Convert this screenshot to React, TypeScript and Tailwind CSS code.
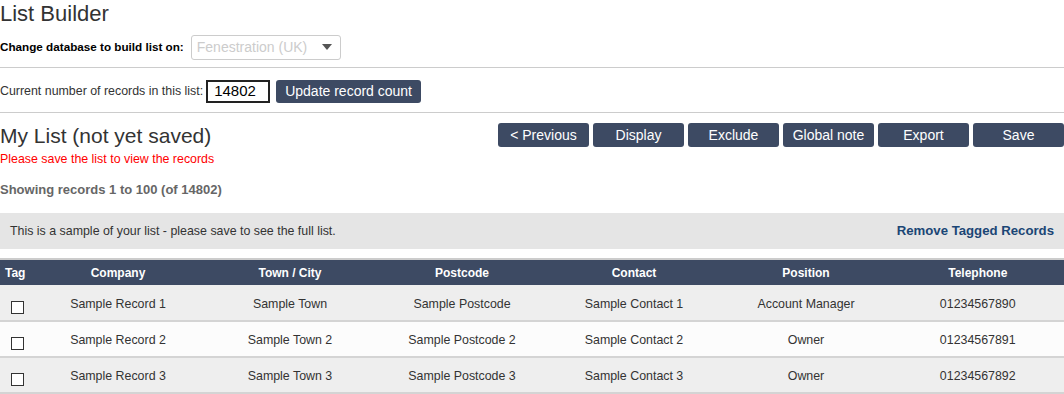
export default function App() {
  const rows = [
    ['Sample Record 1', 'Sample Town', 'Sample Postcode', 'Sample Contact 1', 'Account Manager', '01234567890'],
    ['Sample Record 2', 'Sample Town 2', 'Sample Postcode 2', 'Sample Contact 2', 'Owner', '01234567891'],
    ['Sample Record 3', 'Sample Town 3', 'Sample Postcode 3', 'Sample Contact 3', 'Owner', '01234567892'],
  ]
  const actions = ['< Previous', 'Display', 'Exclude', 'Global note', 'Export', 'Save']

  return (
    <div className="w-[1064px] h-[394px] overflow-hidden bg-white text-[#333] font-['Liberation_Sans',Arial,sans-serif]">
      {/* Header */}
      <h1 className="text-[22px] leading-[26px] pt-[1px]">List Builder</h1>
      <div className="flex items-center h-[24px] mt-[8px]">
        <span className="text-[11.7px] font-bold text-black">Change database to build list on:</span>
        <div className="ml-[7px] w-[150px] h-[25px] border border-[#ccc] rounded-[3px] flex items-center justify-between pl-[5px] pr-[8px]">
          <span className="text-[14px] text-[#ccc]">Fenestration (UK)</span>
          <svg width="10" height="6" viewBox="0 0 10 6"><path d="M0 0h10L5 6z" fill="#555" /></svg>
        </div>
      </div>
      <div className="mt-[8px] border-t border-[#ccc]" />

      <div className="flex items-center h-[22px] mt-[12px]">
        <span className="text-[12.4px]">Current number of records in this list:</span>
        <div className="ml-[3px] w-[64px] h-[23px] border-2 border-[#222] flex items-center pl-[6px] text-[15px] text-black">14802</div>
        <button className="ml-[6px] h-[23px] px-[9px] bg-[#3d4a63] text-white text-[14px] rounded-[3px]">Update record count</button>
      </div>
      <div className="mt-[10px] border-t border-[#ccc]" />

      {/* List heading */}
      <div className="flex justify-between">
        <div>
          <h2 className="text-[21px] leading-[24px] mt-[11px]">My List (not yet saved)</h2>
          <p className="text-[12.4px] text-[#f00] mt-[4px] leading-[14px]">Please save the list to view the records</p>
          <p className="text-[13px] font-bold text-[#666] mt-[16px] leading-[16px]">Showing records 1 to 100 (of 14802)</p>
        </div>
        <div className="flex gap-[4px] mt-[10px] h-[24px]">
          {actions.map((a) => (
            <button key={a} className="w-[91px] h-[24px] bg-[#3d4a63] text-white text-[14px] rounded-[3px]">{a}</button>
          ))}
        </div>
      </div>

      {/* Sample bar */}
      <div className="mt-[15px] h-[36px] bg-[#e5e5e5] flex items-center justify-between pl-[10px] pr-[10px]">
        <span className="text-[12.4px]">This is a sample of your list - please save to see the full list.</span>
        <span className="text-[13.2px] font-bold text-[#1b4675]">Remove Tagged Records</span>
      </div>

      {/* Table */}
      <table className="mt-[9px] w-[1064px] border-collapse table-fixed border-t-2 border-r border-[#ccc] text-[12.4px]">
        <colgroup>
          <col className="w-[32px]" />
          <col className="w-[172px]" />
          <col className="w-[172px]" />
          <col className="w-[172px]" />
          <col className="w-[172px]" />
          <col className="w-[172px]" />
          <col className="w-[172px]" />
        </colgroup>
        <thead>
          <tr className="bg-[#3d4a63] text-white h-[26px]">
            <th className="text-left pl-[5px] font-bold text-[12px]">Tag</th>
            <th className="font-bold text-[12px]">Company</th>
            <th className="font-bold text-[12px]">Town / City</th>
            <th className="font-bold text-[12px]">Postcode</th>
            <th className="font-bold text-[12px]">Contact</th>
            <th className="font-bold text-[12px]">Position</th>
            <th className="font-bold text-[12px]">Telephone</th>
          </tr>
        </thead>
        <tbody>
          {rows.map((r, i) => (
            <tr key={i} className={`h-[36px] border-b-2 border-[#d4d4d4] ${i % 2 === 0 ? 'bg-[#eeeeee]' : 'bg-[#fcfcfc]'}`}>
              <td className="pl-[11px] pt-[9px]">
                <div className="w-[13px] h-[13px] border border-[#333] bg-white" />
              </td>
              {r.map((c, j) => (
                <td key={j} className="text-center pt-[3px]">{c}</td>
              ))}
            </tr>
          ))}
        </tbody>
      </table>
    </div>
  )
}
